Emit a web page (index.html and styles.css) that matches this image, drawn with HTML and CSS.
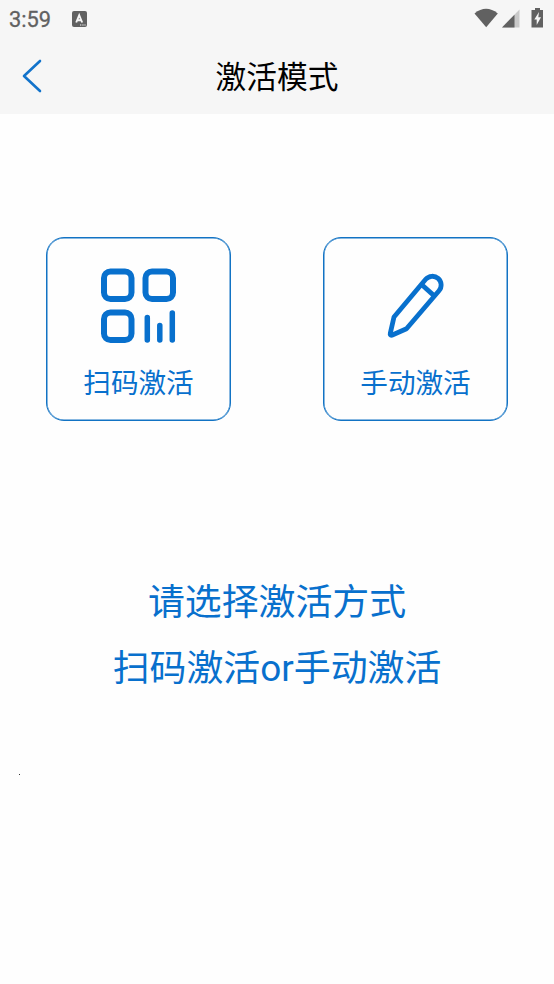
FILE: index.html
```html
<!DOCTYPE html>
<html lang="zh-CN">
<head>
    <meta charset="UTF-8">
    <meta name="viewport" content="width=device-width, initial-scale=1.0">
    <title>激活模式</title>
    <link rel="stylesheet" href="styles.css">
</head>
<body>
    <header class="top">
        <div class="status-bar">
            <span class="time">3:59</span>
            <svg class="app-icon" width="15" height="16" viewBox="0 0 15 16">
                <rect width="15" height="16" rx="2" fill="#616161"/>
                <path d="M4.2 11.5L7.2 4.2L10.2 11.5M5.3 9.3H9.1" fill="none" stroke="#f6f6f6" stroke-width="1.9"/>
                <path d="M8 14H9.3M10.3 14H11.6M12.4 14H13.6" stroke="#f6f6f6" stroke-width="1.2"/>
            </svg>
            <svg class="status-icons" width="72" height="22" viewBox="0 0 72 22">
                <path d="M0.5 5.5Q12 -3.8 23.8 5.5L12.2 19.2Z" fill="#616161"/>
                <path d="M45.5 1.5V19.5H28Z" fill="#c9c9c9"/>
                <path d="M40.5 6.7V19.5H28Z" fill="#616161"/>
                <path d="M61 0H66V2H69V19.5H57.5V2H61Z" fill="#616161"/>
                <path d="M65 4L60.3 11.5H62.7V17L67 9.2H64.3Z" fill="#f6f6f6"/>
            </svg>
        </div>
        <div class="nav-bar">
            <svg class="back" width="22" height="36" viewBox="0 0 22 36">
                <path d="M19 3L3 18L19 33" fill="none" stroke="#1273cb" stroke-width="2.6" stroke-linecap="round" stroke-linejoin="round"/>
            </svg>
            <h1>激活模式</h1>
        </div>
    </header>

    <main>
        <div class="modes">
            <div class="mode-card">
                <svg width="76" height="76" viewBox="0 0 76 76" fill="none" stroke="#0870cd">
                    <g stroke-width="6">
                        <rect x="3" y="3.5" width="27.5" height="27.5" rx="6.5"/>
                        <rect x="44.5" y="3.5" width="27.5" height="27.5" rx="6.5"/>
                        <rect x="3" y="44.5" width="27.5" height="27.5" rx="6.5"/>
                    </g>
                    <path d="M46.3 49.5V72M58.8 57.5V72M71.3 45V72" stroke-width="5.5" stroke-linecap="round"/>
                </svg>
                <span>扫码激活</span>
            </div>
            <div class="mode-card">
                <svg width="76" height="76" viewBox="0 0 76 76" fill="none" stroke="#0870cd" stroke-width="4.8" stroke-linejoin="round">
                    <path d="M16 49L47.7 11.3A8.7 8.7 0 0 1 61 22.8L28.5 60.8L13.8 67.2Q11.8 67.6 12.3 65.2Z"/>
                    <path d="M43.8 16.8L56 27.6"/>
                </svg>
                <span>手动激活</span>
            </div>
        </div>

        <div class="tips">
            <p>请选择激活方式</p>
            <p>扫码激活or手动激活</p>
        </div>

        <div class="dot"></div>
    </main>
</body>
</html>
```
FILE: styles.css
```css
body {
    margin: 0;
    height: 984px;
    overflow: hidden;
    background: #fefefe;
    font-family: Roboto, "Noto Sans CJK SC", sans-serif;
    color: #0870cd;
}

.top {
    height: 114px;
    background: #f6f6f6;
}

.status-bar {
    display: flex;
    align-items: center;
    height: 38px;
    padding: 0 9px;
}

.time {
    width: 63px;
    font-size: 21.8px;
    color: #616161;
    -webkit-text-stroke: 0.3px #616161;
}

.app-icon {
    display: block;
}

.status-icons {
    display: block;
    margin-left: auto;
    margin-right: -1px;
}

.nav-bar {
    display: grid;
    grid-template-columns: 60px 1fr 60px;
    align-items: center;
    height: 76px;
}

.back {
    margin-left: 21px;
}

.nav-bar h1 {
    margin: 0;
    padding-top: 3px;
    text-align: center;
    font-size: 30.7px;
    font-weight: 400;
    line-height: 73px;
    color: #000;
}

.modes {
    display: flex;
    justify-content: space-around;
    padding-top: 123px;
}

.mode-card {
    box-sizing: border-box;
    display: flex;
    flex-direction: column;
    align-items: center;
    width: 185px;
    height: 184px;
    padding-top: 30px;
    border: 1px solid #1273c4;
    border-radius: 18px;
    box-shadow: inset 0 0 0 0.5px #1273c4;
}

.mode-card span {
    margin-top: 20px;
    font-size: 27.6px;
    line-height: 40px;
}

.tips {
    margin-top: 149px;
    text-align: center;
}

.tips p {
    margin: 0;
    font-size: 36.9px;
    line-height: 65.5px;
}

.dot {
    width: 1px;
    height: 1px;
    margin: 73px 0 0 19px;
    background: #333;
}
```
